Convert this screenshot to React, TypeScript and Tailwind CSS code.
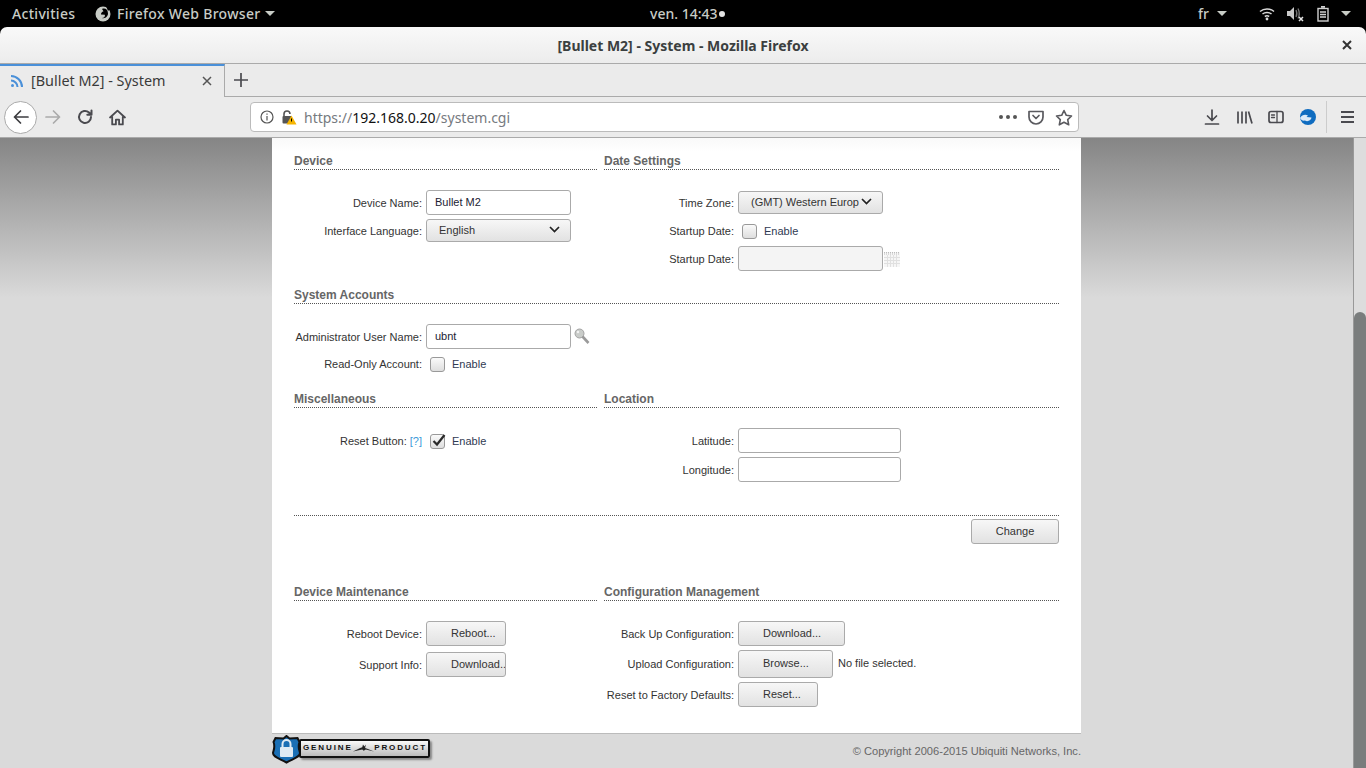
import React from "react";

const Head = ({ children, className = "" }: { children: React.ReactNode; className?: string }) => (
  <div className={"h-[32px] flex items-end border-b border-dotted border-[#555] text-[12px] font-bold leading-[15px] text-[#666] " + className}>{children}</div>
);

const Label = ({ w, children }: { w: number; children: React.ReactNode }) => (
  <span className={"text-right shrink-0 mr-[4px] " + (w === 128 ? "w-[128px]" : "w-[130px]")}>{children}</span>
);

const Box = ({ w, h, v, muted }: { w: string; h: string; v?: string; muted?: boolean }) => (
  <div className={`${w} ${h} shrink-0 rounded-[3px] border border-[#aaa] pl-[8px] flex items-center pb-[1px] text-[#223] ${muted ? "bg-[#f4f4f4]" : "bg-white"}`}>{v}</div>
);

const Btn = ({ w, h, pad, children }: { w: string; h: string; pad: string; children: React.ReactNode }) => (
  <div className={`${w} ${h} ${pad} shrink-0 overflow-hidden whitespace-nowrap flex items-center rounded-[3px] border border-[#aaa] bg-gradient-to-b from-[#f7f7f7] to-[#e2e2e2] pb-[2px] text-[#333]`}>{children}</div>
);

const Chevron = () => (
  <svg width="11" height="7" viewBox="0 0 11 7" className="shrink-0"><path d="M1 1l4.500 4.500L10 1" fill="none" stroke="#222" strokeWidth="1.700" /></svg>
);

const Check = ({ on }: { on?: boolean }) => (
  <div className="relative w-[15px] h-[15px] rounded-[3px] border border-[#999] bg-gradient-to-b from-[#fafafa] to-[#dedede] shrink-0">
    {on && (
      <svg width="16" height="15" viewBox="0 0 16 15" className="absolute left-[0px] top-[-2px]"><path d="M2.500 8l3.500 3.500L13.500 2" fill="none" stroke="#2a2a2a" strokeWidth="2.200" /></svg>
    )}
  </div>
);

const Row = ({ className = "", children }: { className?: string; children: React.ReactNode }) => (
  <div className={"flex items-center " + className}>{children}</div>
);

const Enable = () => <span className="text-[#2f3a52]">Enable</span>;

const Icon = ({ children }: { children: React.ReactNode }) => (
  <div className="w-[32px] h-[32px] flex items-center justify-center shrink-0">{children}</div>
);

const S = ({ children, w = 18, vb = "0 0 18 18" }: { children: React.ReactNode; w?: number; vb?: string }) => (
  <svg width={w} height={w} viewBox={vb} fill="none" stroke="#4a4a4f" strokeWidth="1.700" strokeLinecap="round" strokeLinejoin="round">{children}</svg>
);

export default function App() {
  return (
    <div className="w-[1366px] h-[768px] overflow-hidden flex flex-col bg-black font-['Liberation_Sans',Arial,sans-serif]">
      {/* GNOME bar */}
      <div className="h-[27px] shrink-0 flex items-center relative text-[14px] font-['Noto_Sans',sans-serif] font-medium text-[#c8ccc6] bg-black">
        <span className="ml-[12px] w-[63px] whitespace-nowrap tracking-[0.300px]">Activities</span>
        <svg width="16" height="16" viewBox="0 0 16 16" className="ml-[20px]">
          <circle cx="8" cy="8" r="7.500" fill="#c8ccc6" />
          <path d="M7 3c3-1.500 6 .5 6 4.500 0 3-3 5.500-6 4.500 2 0 3.500-1.500 2.800-3.300L6 8.500c0-2 1-2.500 2.500-3.300z" fill="#000" />
          <path d="M11 0l4 3-2 2z" fill="#000" />
        </svg>
        <span className="ml-[6px] whitespace-nowrap tracking-[0.300px]">Firefox Web Browser</span>
        <span className="ml-[5px] w-0 h-0 border-x-[5px] border-x-transparent border-t-[5px] border-t-[#c8ccc6]" />
        <div className="absolute left-[650px] top-[3px] flex items-center whitespace-nowrap">
          <span>ven. 14:43</span>
          <span className="ml-[2px] w-[6px] h-[6px] rounded-full bg-[#e4e4e4]" />
        </div>
        <div className="ml-auto flex items-center">
          <span>fr</span>
          <span className="ml-[8px] w-0 h-0 border-x-[5px] border-x-transparent border-t-[5px] border-t-[#c8ccc6]" />
          <svg width="16" height="14" viewBox="0 0 16 14" className="ml-[32px]" fill="none" stroke="#d8d8d8" strokeWidth="1.500">
            <path d="M1 4.500c4-3.500 10-3.500 14 0M3.500 7c2.500-2 6.500-2 9 0M5.800 9.500c1.300-.8 3.100-.8 4.400 0" />
            <circle cx="8" cy="12" r="1.400" fill="#d8d8d8" stroke="none" />
          </svg>
          <svg width="17" height="16" viewBox="0 0 17 16" className="ml-[12px]" fill="none">
            <path d="M0 5h3l4-4v13l-4-4H0z" fill="#c8c8c8" />
            <path d="M9 4c1 2 1 5 0 7M11 2.500c1.500 3 1.500 7 0 10" stroke="#777" strokeWidth="1.300" />
            <path d="M12 11l4 4M16 11l-4 4" stroke="#e4e4e4" strokeWidth="1.500" />
          </svg>
          <svg width="12" height="16" viewBox="0 0 12 16" className="ml-[13px]" fill="none" stroke="#d0d0d0" strokeWidth="1.400">
            <rect x="1" y="2.500" width="10" height="12.500" />
            <path d="M4 .8h4" strokeWidth="2" />
            <path d="M3 6h6M3 8.500h6M3 11h6" />
          </svg>
          <span className="ml-[12px] mr-[15px] w-0 h-0 border-x-[5px] border-x-transparent border-t-[5px] border-t-[#c8ccc6]" />
        </div>
      </div>

      {/* Title bar */}
      <div className="h-[37px] shrink-0 rounded-t-[7px] bg-gradient-to-b from-[#f9f9f9] to-[#ececec] border-b border-[#aaa] relative flex items-center justify-center font-['Noto_Sans',sans-serif] text-[14px] font-bold text-[#3b3f40]">
        <span>[Bullet M2] - System - Mozilla Firefox</span>
        <svg width="10" height="10" viewBox="0 0 10 10" className="absolute right-[14px] top-[13px]"><path d="M1 1l8 8M9 1l-8 8" stroke="#333" strokeWidth="2" /></svg>
      </div>

      {/* Tab bar */}
      <div className="h-[33px] shrink-0 flex bg-[#ebebeb] font-['Noto_Sans',sans-serif]">
        <div className="w-[225px] h-[33px] border-t-[2px] border-[#4a90d9] border-r border-r-[#aaa] flex items-center pl-[10px] pb-[1px] text-[14.400px] text-[#3a3a3a]">
          <svg width="14" height="14" viewBox="0 0 14 14" fill="none" stroke="#4a90d9" strokeWidth="2"><circle cx="2.500" cy="11.500" r="1.500" fill="#4a90d9" stroke="none" /><path d="M1 6.500c3.500 0 6.500 3 6.500 6.500M1 2c6 0 11 5 11 11" /></svg>
          <span className="ml-[7px] whitespace-nowrap">[Bullet M2] - System</span>
          <svg width="10" height="10" viewBox="0 0 10 10" className="ml-auto mr-[12px]"><path d="M1 1l8 8M9 1l-8 8" stroke="#555" strokeWidth="1.500" /></svg>
        </div>
        <div className="flex-1 border-b border-[#aaa] pl-[9px] flex items-center">
          <svg width="14" height="14" viewBox="0 0 14 14"><path d="M7 0v14M0 7h14" stroke="#4a4a4f" strokeWidth="1.700" /></svg>
        </div>
      </div>

      {/* Nav bar */}
      <div className="h-[41px] shrink-0 bg-[#ebebeb] border-b border-[#aaa] flex items-center font-['Noto_Sans',sans-serif]">
        <div className="ml-[4px] w-[33px] h-[33px] rounded-full bg-white border border-[#aaa] flex items-center justify-center shrink-0">
          <S><path d="M16 9H2.500M8.500 3L2.500 9l6 6" stroke="#3c3c40" /></S>
        </div>
        <Icon><S><path d="M2 9h13.500M9.500 3l6 6-6 6" stroke="#ababab" /></S></Icon>
        <Icon><S w={16} vb="0 0 16 16"><path d="M14 8a6 6 0 1 1-2-4.500L14 5.500M14.500 1.500v4.200h-4.200" strokeWidth="2" /></S></Icon>
        <Icon><S w={17} vb="0 0 16 16"><path d="M1 8l7-6.500L15 8M3 7v7.500h3.500V10h3v4.500H13V7" /></S></Icon>
        <div className="ml-[117px] w-[829px] h-[30px] rounded-[4px] border border-[#bbb] bg-white flex items-center shrink-0">
          <svg width="14" height="14" viewBox="0 0 14 14" className="ml-[9px]" fill="none" stroke="#555" strokeWidth="1.200"><circle cx="7" cy="7" r="6" /><path d="M7 6v4.500M7 3.500v1.300" /></svg>
          <svg width="16" height="16" viewBox="0 0 16 16" className="ml-[7px]">
            <path d="M3 8V5a3 3 0 0 1 6 0" fill="none" stroke="#555" strokeWidth="1.600" />
            <rect x="1.500" y="7" width="9" height="7.500" rx="1" fill="#555" />
            <path d="M10.500 6.500l5 9h-10z" fill="#f5b400" />
            <path d="M10.500 9.500v3" stroke="#000" strokeWidth="1" />
          </svg>
          <span className="ml-[7px] text-[14px] text-[#767a80] whitespace-nowrap">https://<span className="text-[#111]">192.168.0.20</span>/system.cgi</span>
          <div className="ml-auto flex items-center gap-[3px] text-[#555]">
            <span className="w-[4px] h-[4px] rounded-full bg-[#555]" />
            <span className="w-[4px] h-[4px] rounded-full bg-[#555]" />
            <span className="w-[4px] h-[4px] rounded-full bg-[#555]" />
          </div>
          <svg width="16" height="15" viewBox="0 0 16 15" className="ml-[11px]" fill="none" stroke="#5a5a5f" strokeWidth="1.700" strokeLinejoin="round"><path d="M1 1.500h14v5.500a7 7 0 0 1-14 0z" /><path d="M5 5.500l3 3 3-3" strokeLinecap="round" /></svg>
          <svg width="18" height="17" viewBox="0 0 18 17" className="ml-[11px] mr-[5px]" fill="none" stroke="#5a5a5f" strokeWidth="1.600" strokeLinejoin="round"><path d="M9 1.500l2.300 4.800 5.200.7-3.800 3.600 1 5.200L9 13.300l-4.700 2.500 1-5.200L1.500 7l5.200-.7z" /></svg>
        </div>
        <div className="ml-[117px] flex items-center">
          <Icon><S w={16} vb="0 0 16 16"><path d="M8 1v10M3.500 7L8 11.500 12.500 7M1.500 15h13" /></S></Icon>
          <Icon><S w={17} vb="0 0 17 16"><path d="M2 2v12M6 2v12M10 2v12M12.500 2l3.500 12" strokeLinecap="butt" /></S></Icon>
          <Icon><S w={16} vb="0 0 16 16"><rect x="1" y="2.500" width="14" height="11" rx="2" /><path d="M9 2.500v11M3.500 6h3M3.500 8.500h3" strokeWidth="1.300" /></S></Icon>
          <Icon>
            <svg width="16" height="16" viewBox="0 0 16 16">
              <circle cx="8" cy="8" r="8" fill="#0f6cc0" />
              <path d="M0 9c2-3 5-4 8-2.500L6.500 8l5 .5c0 2-3.500 5-6.500 3-2 .5-4-.5-5-2.500z" fill="#dceaf7" />
            </svg>
          </Icon>
          <div className="w-px h-[32px] bg-[#ccc] ml-[2px] mr-[4px]" />
          <Icon><svg width="13" height="12" viewBox="0 0 13 12"><path d="M0 1h13M0 6h13M0 11h13" stroke="#4a4a4f" strokeWidth="1.800" /></svg></Icon>
        </div>
      </div>

      {/* Content */}
      <div className="flex-1 min-h-0 flex bg-[#dadada]">
        <div className="flex-1 min-w-0 flex flex-col bg-[linear-gradient(#858585,#dadada_160px)]">
          <div className="ml-[272px] w-[809px] h-[596px] shrink-0 bg-gradient-to-b from-[#f9f9f9] to-white to-[14px] px-[22px] text-[11px] leading-[14px] text-[#333] border-b border-[#bbb]">
            {/* Device / Date */}
            <div className="grid grid-cols-[303px_455px] gap-x-[7px] h-[134px]">
              <div>
                <Head>Device</Head>
                <Row className="mt-[20px]"><Label w={128}>Device Name:</Label><Box w="w-[145px]" h="h-[25px]" v="Bullet M2" /></Row>
                <Row className="mt-[4px]"><Label w={128}>Interface Language:</Label>
                  <Btn w="w-[145px]" h="h-[23px]" pad="pl-[12px] pr-[10px] justify-between"><span>English</span><Chevron /></Btn>
                </Row>
              </div>
              <div>
                <Head>Date Settings</Head>
                <Row className="mt-[21px]"><Label w={130}>Time Zone:</Label>
                  <Btn w="w-[145px]" h="h-[23px]" pad="pl-[12px] pr-[10px] justify-between"><span>(GMT) Western Europ</span><Chevron /></Btn>
                </Row>
                <Row className="mt-[8px] h-[18px]"><Label w={130}>Startup Date:</Label><span className="ml-[4px]"><Check /></span><span className="ml-[7px]"><Enable /></span></Row>
                <Row className="mt-[6px]"><Label w={130}>Startup Date:</Label><Box w="w-[145px]" h="h-[25px]" muted />
                  <svg width="16" height="15" viewBox="0 0 16 15" className="ml-[1px] mt-[1px]"><rect width="16" height="15" fill="#f6f6f6" /><path d="M0 .5h16M0 2h16" stroke="#bbb" strokeDasharray="1 1" /><path d="M0 5.500h16M0 8.500h16M0 11.500h16M3.500 3v12M6.500 3v12M9.500 3v12M12.500 3v12" stroke="#e0e0e0" /></svg>
                </Row>
              </div>
            </div>

            {/* System Accounts */}
            <div className="h-[104px]">
              <Head>System Accounts</Head>
              <Row className="mt-[20px]"><Label w={128}>Administrator User Name:</Label><Box w="w-[145px]" h="h-[25px]" v="ubnt" />
                <svg width="16" height="17" viewBox="0 0 16 17" className="ml-[3px]"><circle cx="5.500" cy="5.500" r="4.500" fill="#c9ccc9" stroke="#a2a2a2" /><circle cx="4" cy="4" r="1.200" fill="#f2f2f2" /><path d="M8.500 8.500l6 6.500" stroke="#9a9a9a" strokeWidth="2.600" /></svg>
              </Row>
              <Row className="mt-[6px] h-[18px]"><Label w={128}>Read-Only Account:</Label><span className="ml-[4px]"><Check /></span><span className="ml-[7px]"><Enable /></span></Row>
            </div>

            {/* Misc / Location */}
            <div className="grid grid-cols-[303px_455px] gap-x-[7px] h-[106px]">
              <div>
                <Head>Miscellaneous</Head>
                <Row className="mt-[24px] h-[18px]"><Label w={128}>Reset Button: <span className="text-[#3a9ad9]">[?]</span></Label><span className="ml-[4px]"><Check on /></span><span className="ml-[7px]"><Enable /></span></Row>
              </div>
              <div>
                <Head>Location</Head>
                <Row className="mt-[20px]"><Label w={130}>Latitude:</Label><Box w="w-[163px]" h="h-[25px]" /></Row>
                <Row className="mt-[4px]"><Label w={130}>Longitude:</Label><Box w="w-[163px]" h="h-[25px]" /></Row>
              </div>
            </div>

            <div className="mt-[33px] border-t border-dotted border-[#555]" />
            <div className="mt-[3px] flex justify-end">
              <Btn w="w-[88px]" h="h-[25px]" pad="justify-center">Change</Btn>
            </div>

            {/* Maintenance / Config */}
            <div className="mt-[25px] grid grid-cols-[303px_455px] gap-x-[7px]">
              <div>
                <Head>Device Maintenance</Head>
                <Row className="mt-[20px]"><Label w={128}>Reboot Device:</Label><Btn w="w-[80px]" h="h-[25px]" pad="pl-[24px]">Reboot...</Btn></Row>
                <Row className="mt-[6px]"><Label w={128}>Support Info:</Label><Btn w="w-[80px]" h="h-[25px]" pad="pl-[24px]">Download..</Btn></Row>
              </div>
              <div>
                <Head>Configuration Management</Head>
                <Row className="mt-[20px]"><Label w={130}>Back Up Configuration:</Label><Btn w="w-[107px]" h="h-[25px]" pad="pl-[24px]">Download...</Btn></Row>
                <Row className="mt-[4px]"><Label w={130}>Upload Configuration:</Label><Btn w="w-[95px]" h="h-[28px]" pad="pl-[24px]">Browse...</Btn><span className="ml-[5px] pb-[2px]">No file selected.</span></Row>
                <Row className="mt-[4px]"><Label w={130}>Reset to Factory Defaults:</Label><Btn w="w-[80px]" h="h-[25px]" pad="pl-[24px]">Reset...</Btn></Row>
              </div>
            </div>
          </div>

          {/* Footer */}
          <div className="ml-[272px] w-[809px] flex justify-between items-start mt-[1px]">
            <div className="flex items-center">
              <svg width="29" height="29" viewBox="0 0 29 29" className="shrink-0 relative z-10">
                <path d="M14.500 1l3 2.500 8-.5 2 4c-2 5 0 8 .5 11 0 4-5 5-13.500 9.500C6 23 1 22 1 18c.5-3 2.500-6 .5-11l2-4 8 .5z" fill="#1a6fb5" stroke="#111" strokeWidth="2" />
                <rect x="8" y="12" width="13" height="10" rx="1" fill="#dfeaf3" />
                <path d="M10.500 12V9a4 4 0 0 1 8 0v3" fill="none" stroke="#dfeaf3" strokeWidth="2" />
              </svg>
              <div className="-ml-[2px] mt-[-3px] w-[131px] h-[19px] border-2 border-[#111] rounded-[2px] bg-gradient-to-b from-[#fafafa] to-[#bbb] shadow-[2px_2px_2px_#888] flex items-center justify-between pl-[2px] pr-[1px] text-[8px] font-bold tracking-[1.900px] text-[#111] leading-none">
                <span>GENUINE</span>
                <svg width="30" height="12" viewBox="0 0 30 12"><path d="M0 11l10-5 3-1 1-4 2 3 2-3-1 5 3 1 10 4-12-3-3 2-2-2z" fill="#222" /></svg>
                <span>PRODUCT</span>
              </div>
            </div>
            <span className="mt-[9px] text-[11.100px] leading-[14px] text-[#666]">© Copyright 2006-2015 Ubiquiti Networks, Inc.</span>
          </div>
        </div>
        {/* Scrollbar */}
        <div className="w-[13px] shrink-0 bg-[#dddddd] border-l border-[#999] pt-[174px]">
          <div className="h-full rounded-t-[6px] bg-[#7a7d7d]" />
        </div>
      </div>
    </div>
  );
}
